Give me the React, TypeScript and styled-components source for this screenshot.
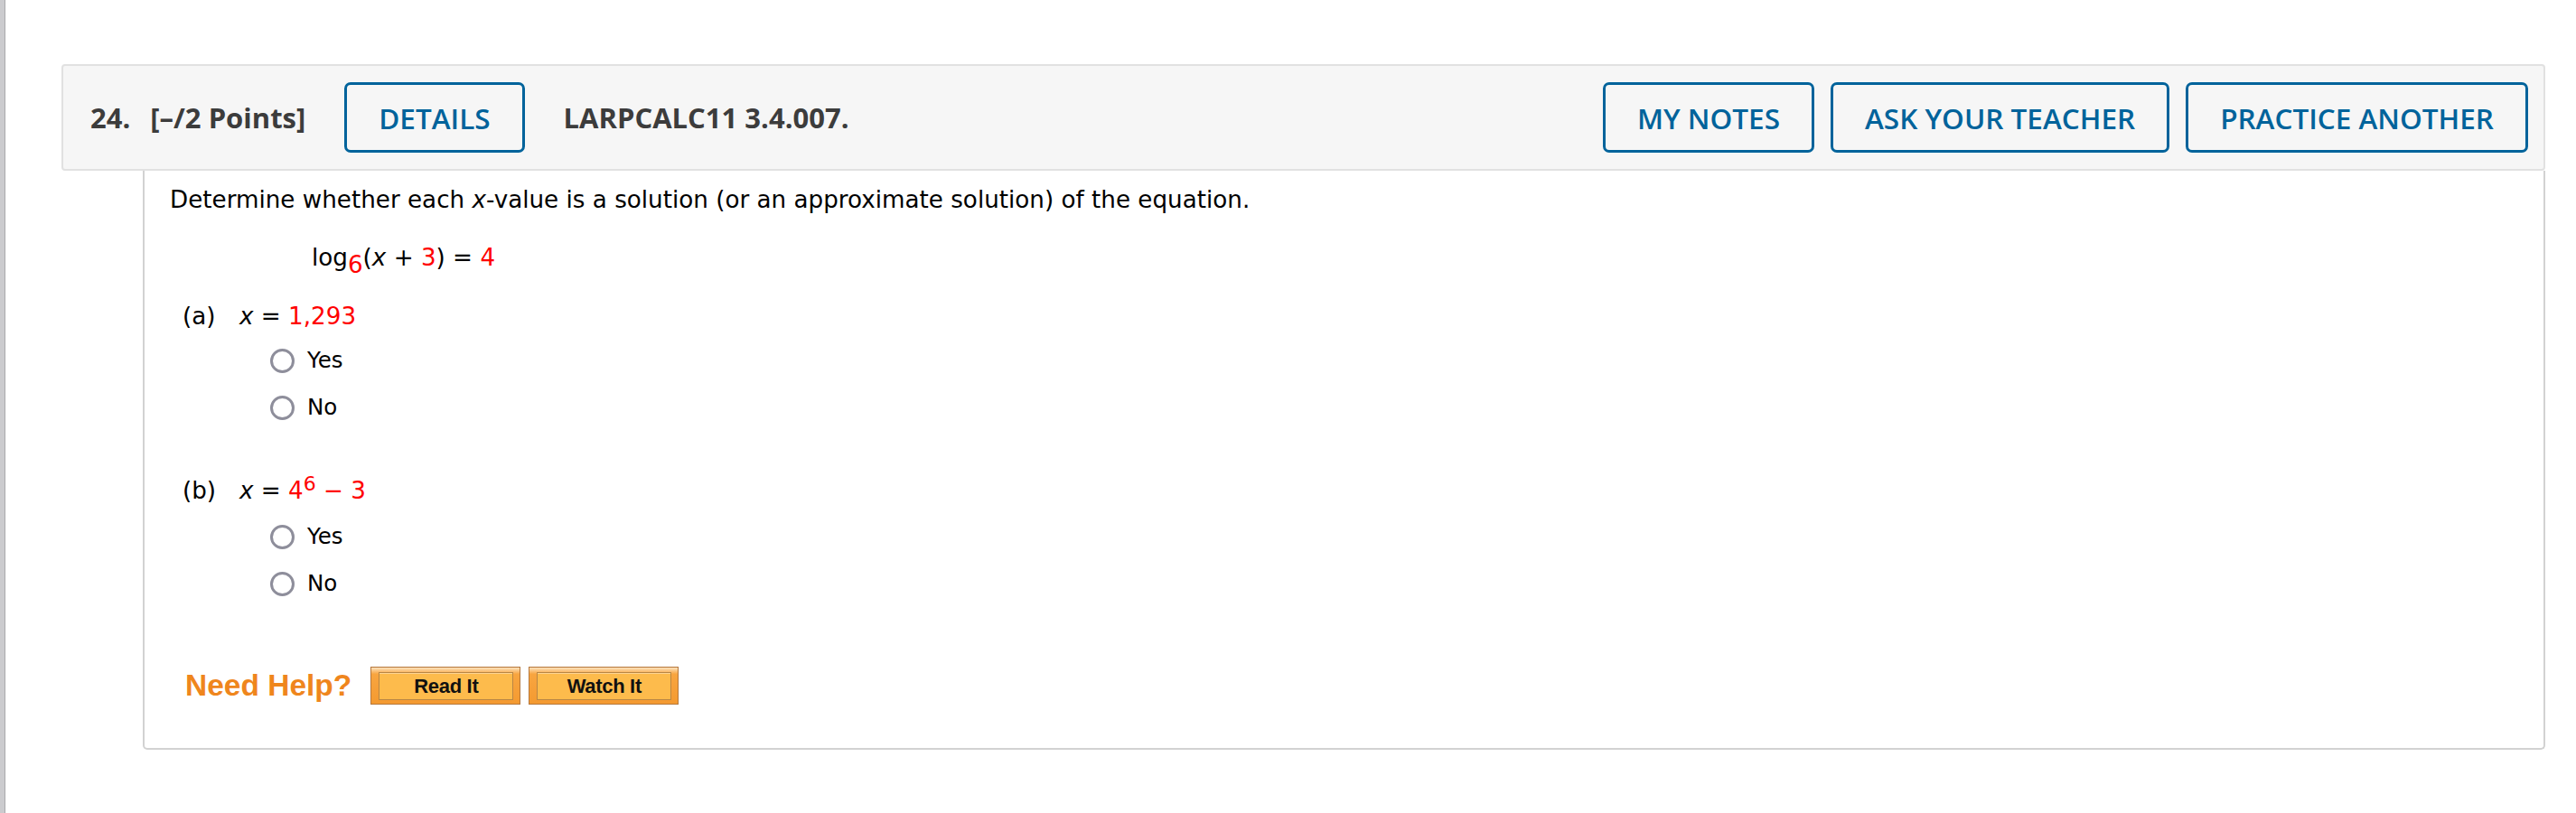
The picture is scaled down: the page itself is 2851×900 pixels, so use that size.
import React from "react";
import styled, { createGlobalStyle } from "styled-components";

const GlobalStyle = createGlobalStyle`
  html, body {
    margin: 0;
    padding: 0;
    background: #ffffff;
  }
  body {
    font-family: "DejaVu Sans", Verdana, sans-serif;
    color: #000000;
  }
`;

const Page = styled.div`
  display: flex;
  min-height: 900px;
`;

const Rail = styled.div`
  flex: none;
  width: 5px;
  background: #cbcbce;
  border-right: 1px solid #a9a9ac;
`;

const Main = styled.div`
  flex: 1;
  padding: 71px 34px 0 62px;
`;

const QuestionHeader = styled.div`
  display: flex;
  align-items: center;
  box-sizing: border-box;
  height: 118px;
  padding: 0 17px 0 30px;
  background: #f6f6f6;
  border: 2px solid #e1e1e1;
  border-radius: 4px;
  font-family: "Open Sans", sans-serif;
  color: #3c3c3c;
`;

const HeaderText = styled.span<{ $gap?: number }>`
  font-size: 31px;
  font-weight: 700;
  white-space: nowrap;
  margin-left: ${(p) => p.$gap ?? 0}px;
`;

const HeaderButton = styled.button<{ $gap?: number }>`
  box-sizing: border-box;
  height: 78px;
  padding: 0 35px;
  margin-left: ${(p) => p.$gap ?? 0}px;
  background: transparent;
  border: 3px solid #00639b;
  border-radius: 7px;
  font-family: "Open Sans", sans-serif;
  font-size: 31.5px;
  font-weight: 600;
  color: #00639b;
  white-space: nowrap;
  cursor: pointer;
`;

const Actions = styled.div`
  display: flex;
  gap: 18px;
  margin-left: auto;
`;

const Body = styled.div`
  display: flex;
  flex-direction: column;
  box-sizing: border-box;
  height: 641px;
  margin-left: 90px;
  padding: 17px 28px 0 28px;
  border: 2px solid #d2d2d2;
  border-top: none;
  border-radius: 0 0 5px 5px;
`;

const Prompt = styled.div`
  font-size: 26.2px;
  line-height: 30px;
  white-space: nowrap;
`;

const Equation = styled.div`
  font-size: 26.2px;
  line-height: 30px;
  margin: 34px 0 0 157px;
  white-space: nowrap;
`;

const Var = styled.i`
  font-style: italic;
`;

const Red = styled.span`
  color: #ff0000;
`;

const Sub = styled(Red)`
  position: relative;
  top: 8px;
`;

const Sup = styled(Red)`
  font-size: 22px;
  position: relative;
  top: -9px;
`;

const Part = styled.div<{ $top: number }>`
  margin-top: ${(p) => p.$top}px;
  padding-left: 14px;
`;

const PartLine = styled.div`
  display: flex;
  font-size: 26.2px;
  line-height: 30px;
  white-space: nowrap;
`;

const PartLetter = styled.span`
  width: 63px;
`;

const Options = styled.div`
  display: flex;
  flex-direction: column;
  gap: 22px;
  margin: 19px 0 0 97px;
`;

const Option = styled.label`
  display: flex;
  align-items: center;
  gap: 14px;
  font-size: 24.5px;
  line-height: 30px;
`;

const Radio = styled.input`
  appearance: none;
  box-sizing: border-box;
  width: 27px;
  height: 27px;
  margin: 0;
  border: 3.5px solid #8e8e9b;
  border-radius: 50%;
  background: #ffffff;
`;

const HelpRow = styled.div`
  display: flex;
  align-items: center;
  height: 42px;
  margin: 77px 0 0 17px;
`;

const HelpLabel = styled.span`
  font-family: "Liberation Sans", Arial, sans-serif;
  font-size: 33.5px;
  font-weight: 700;
  color: #ef861d;
  margin-right: 21px;
`;

const HelpButton = styled.button`
  box-sizing: border-box;
  width: 166px;
  height: 42px;
  margin-right: 9px;
  padding: 5px 7px 4px 8px;
  border: 1px solid #b5773c;
  background: linear-gradient(#fde2bd 0%, #f8a540 18%, #f49a30 100%);
  cursor: pointer;
`;

const HelpInner = styled.span`
  display: flex;
  align-items: center;
  justify-content: center;
  box-sizing: border-box;
  height: 100%;
  border: 1px solid #b98645;
  box-shadow: inset 0 1px 0 #fed491;
  background: #fdbb4c;
  font-family: "Liberation Sans", Arial, sans-serif;
  font-size: 22px;
  font-weight: 700;
  color: #111111;
  letter-spacing: -0.3px;
`;

type Choice = { name: string };

const YesNo = ({ name }: Choice) => (
  <Options>
    <Option>
      <Radio type="radio" name={name} />
      Yes
    </Option>
    <Option>
      <Radio type="radio" name={name} />
      No
    </Option>
  </Options>
);

export default function App() {
  return (
    <>
      <GlobalStyle />
      <Page>
        <Rail />
        <Main>
          <QuestionHeader>
            <HeaderText>24.</HeaderText>
            <HeaderText $gap={22}>[–/2 Points]</HeaderText>
            <HeaderButton $gap={43}>DETAILS</HeaderButton>
            <HeaderText $gap={43}>LARPCALC11 3.4.007.</HeaderText>
            <Actions>
              <HeaderButton>MY NOTES</HeaderButton>
              <HeaderButton>ASK YOUR TEACHER</HeaderButton>
              <HeaderButton>PRACTICE ANOTHER</HeaderButton>
            </Actions>
          </QuestionHeader>
          <Body>
            <Prompt>
              Determine whether each <Var>x</Var>-value is a solution (or an
              approximate solution) of the equation.
            </Prompt>
            <Equation>
              log<Sub>6</Sub>(<Var>x</Var> + <Red>3</Red>) = <Red>4</Red>
            </Equation>
            <Part $top={35}>
              <PartLine>
                <PartLetter>(a)</PartLetter>
                <span>
                  <Var>x</Var> = <Red>1,293</Red>
                </span>
              </PartLine>
              <YesNo name="a" />
            </Part>
            <Part $top={62}>
              <PartLine>
                <PartLetter>(b)</PartLetter>
                <span>
                  <Var>x</Var> = <Red>4</Red>
                  <Sup>6</Sup>
                  <Red> − 3</Red>
                </span>
              </PartLine>
              <YesNo name="b" />
            </Part>
            <HelpRow>
              <HelpLabel>Need Help?</HelpLabel>
              <HelpButton>
                <HelpInner>Read It</HelpInner>
              </HelpButton>
              <HelpButton>
                <HelpInner>Watch It</HelpInner>
              </HelpButton>
            </HelpRow>
          </Body>
        </Main>
      </Page>
    </>
  );
}
